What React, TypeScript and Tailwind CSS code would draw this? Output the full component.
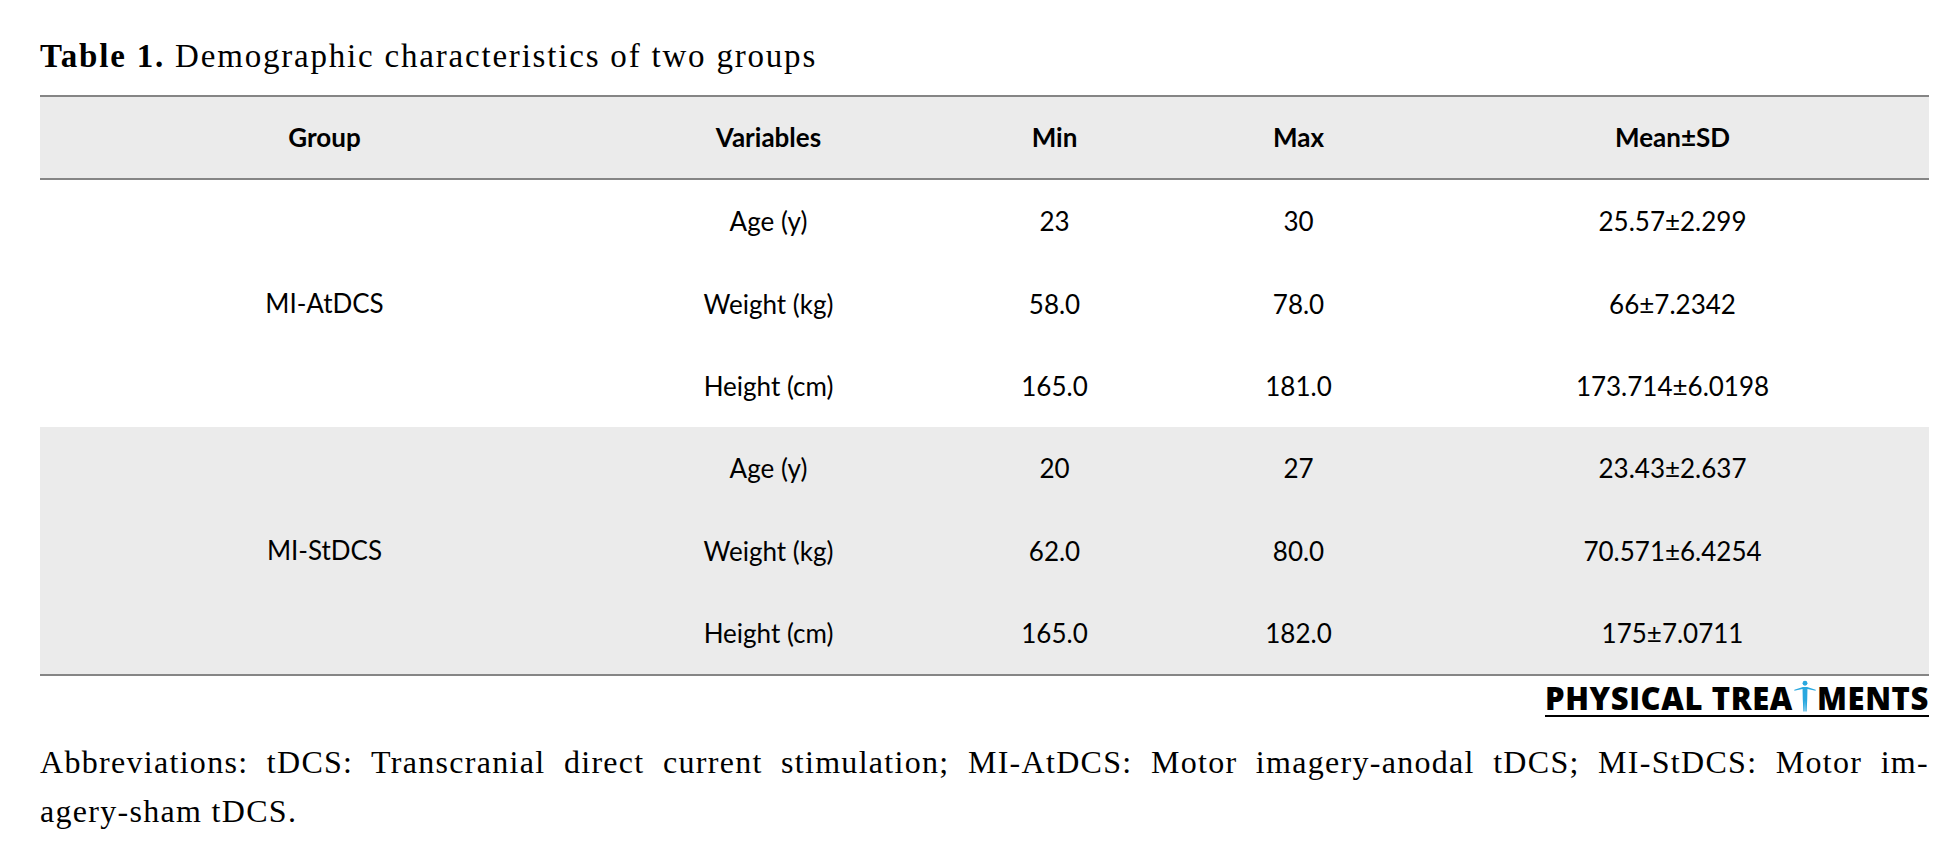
import React from "react";

type Row = { variable: string; min: string; max: string; mean: string };
type Group = { name: string; rows: Row[]; shaded: boolean };

const groups: Group[] = [
  {
    name: "MI-AtDCS",
    shaded: false,
    rows: [
      { variable: "Age (y)", min: "23", max: "30", mean: "25.57±2.299" },
      { variable: "Weight (kg)", min: "58.0", max: "78.0", mean: "66±7.2342" },
      { variable: "Height (cm)", min: "165.0", max: "181.0", mean: "173.714±6.0198" },
    ],
  },
  {
    name: "MI-StDCS",
    shaded: true,
    rows: [
      { variable: "Age (y)", min: "20", max: "27", mean: "23.43±2.637" },
      { variable: "Weight (kg)", min: "62.0", max: "80.0", mean: "70.571±6.4254" },
      { variable: "Height (cm)", min: "165.0", max: "182.0", mean: "175±7.0711" },
    ],
  },
];

const cols = "grid grid-cols-[569px_319px_253px_235px_1fr]";

const Figure = () => (
  <svg viewBox="0 0 22 30" className="h-[32px] w-[24px] -mt-[6px]" aria-hidden="true">
    <g fill="#29a8df">
      <circle cx="11" cy="3" r="2.3" />
      <path d="M1 9.2 L9 6.6 L13 6.6 L21 9.2 L21 10 L13.3 8.4 L13.1 18 L12.5 29.5 L11.4 29.5 L11 19 L10.6 29.5 L9.5 29.5 L8.9 18 L8.7 8.4 L1 10 Z" />
    </g>
  </svg>
);

export default function App() {
  return (
    <div className="w-[1950px] h-[859px] bg-white pl-[40px] pr-[21px] text-black">
      <h1 className="pt-[38px] mb-[21px] text-[33px] leading-[36px] font-['Liberation_Serif',serif] tracking-[1.8px]">
        <span className="font-bold">Table 1.</span> Demographic characteristics of two groups
      </h1>

      <div className="font-['Lato',sans-serif] text-[26px]">
        <div className={`${cols} h-[85px] bg-[#ebebeb] border-y-2 border-[#858585] font-bold`}>
          {["Group", "Variables", "Min", "Max", "Mean±SD"].map((h) => (
            <div key={h} className="flex items-center justify-center">
              {h}
            </div>
          ))}
        </div>

        {groups.map((g) => (
          <div
            key={g.name}
            className={`${cols} grid-rows-[83px_82px_82px] ${g.shaded ? "bg-[#ebebeb]" : "bg-white"}`}
          >
            <div className="row-span-3 flex items-center justify-center">{g.name}</div>
            {g.rows.map((r) => (
              <React.Fragment key={r.variable}>
                <div className="flex items-center justify-center">{r.variable}</div>
                <div className="flex items-center justify-center">{r.min}</div>
                <div className="flex items-center justify-center">{r.max}</div>
                <div className="flex items-center justify-center">{r.mean}</div>
              </React.Fragment>
            ))}
          </div>
        ))}
        <div className="border-t-2 border-[#858585]" />
      </div>

      <div className="flex justify-end mt-[8px]">
        <div className="flex flex-col">
          <div className="flex items-end font-['Open_Sans',sans-serif] font-extrabold text-[31px] leading-[28px] tracking-[0.6px]">
            <span>PHYSICAL TREA</span>
            <Figure />
            <span>MENTS</span>
          </div>
          <div className="h-[2px] bg-black mt-[3px]" />
        </div>
      </div>

      <div className="mt-[21px] font-['Liberation_Serif',serif] text-[32px] leading-[49px] tracking-[1.3px]">
        <p className="text-justify [text-align-last:justify]">
          Abbreviations: tDCS: Transcranial direct current stimulation; MI-AtDCS: Motor imagery-anodal tDCS; MI-StDCS: Motor im-
        </p>
        <p>agery-sham tDCS.</p>
      </div>
    </div>
  );
}
